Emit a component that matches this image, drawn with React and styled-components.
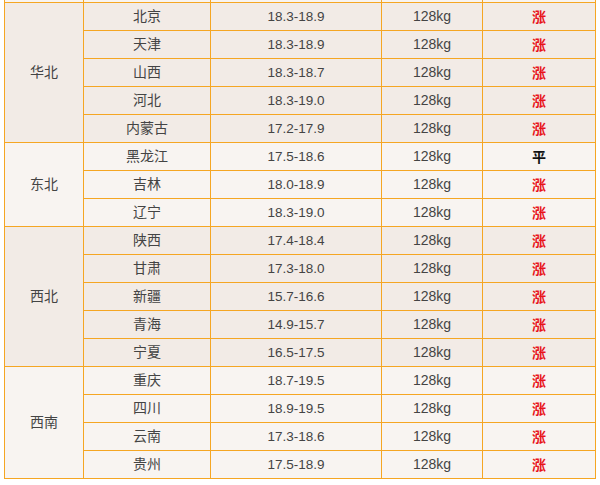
import React from "react";
import styled, { createGlobalStyle } from "styled-components";

const Global = createGlobalStyle`
  html, body { margin: 0; padding: 0; background: #fff; }
  body { font-family: "Liberation Sans", "Noto Sans CJK SC", sans-serif; overflow: hidden; }
`;

const Page = styled.div`
  width: 600px;
  height: 485px;
  overflow: hidden;
  padding-left: 4px;
  box-sizing: border-box;
`;

const Table = styled.table`
  border-collapse: collapse;
  table-layout: fixed;
  width: 591px;
  margin-top: -26px;
  color: #444;
  font-size: 14px;
`;

const Col = styled.col`
  width: ${(p) => p.$w}px;
`;

const Row = styled.tr`
  height: 28px;
  background: ${(p) => (p.$alt ? "#f8f4f1" : "#f2ebe6")};
`;

const Cell = styled.td`
  border: 1px solid #f5a623;
  text-align: center;
  vertical-align: middle;
  padding: 0;
  height: 27px;
  line-height: 27px;
  font-family: "Liberation Sans", "Noto Sans CJK SC", sans-serif;
  font-size: 14px;
`;

const PriceCell = styled(Cell)`
  font-size: 13.5px;
`;

const TrendCell = styled(Cell)`
  color: ${(p) => (p.$up ? "#e8141a" : "#111")};
  font-weight: bold;
  font-family: "Noto Sans CJK SC", sans-serif;
`;

const columns = [79, 127, 171, 101, 113];

const groups = [
  { region: "", alt: true, rows: [["", "", "", ""]] },
  {
    region: "华北",
    alt: false,
    rows: [
      ["北京", "18.3-18.9", "128kg", "涨"],
      ["天津", "18.3-18.9", "128kg", "涨"],
      ["山西", "18.3-18.7", "128kg", "涨"],
      ["河北", "18.3-19.0", "128kg", "涨"],
      ["内蒙古", "17.2-17.9", "128kg", "涨"],
    ],
  },
  {
    region: "东北",
    alt: true,
    rows: [
      ["黑龙江", "17.5-18.6", "128kg", "平"],
      ["吉林", "18.0-18.9", "128kg", "涨"],
      ["辽宁", "18.3-19.0", "128kg", "涨"],
    ],
  },
  {
    region: "西北",
    alt: false,
    rows: [
      ["陕西", "17.4-18.4", "128kg", "涨"],
      ["甘肃", "17.3-18.0", "128kg", "涨"],
      ["新疆", "15.7-16.6", "128kg", "涨"],
      ["青海", "14.9-15.7", "128kg", "涨"],
      ["宁夏", "16.5-17.5", "128kg", "涨"],
    ],
  },
  {
    region: "西南",
    alt: true,
    rows: [
      ["重庆", "18.7-19.5", "128kg", "涨"],
      ["四川", "18.9-19.5", "128kg", "涨"],
      ["云南", "17.3-18.6", "128kg", "涨"],
      ["贵州", "17.5-18.9", "128kg", "涨"],
    ],
  },
];

export default function App() {
  return (
    <>
      <Global />
      <Page>
        <Table>
          <colgroup>
            {columns.map((w, i) => (
              <Col key={i} $w={w} />
            ))}
          </colgroup>
          <tbody>
            {groups.map((g, gi) =>
              g.rows.map((r, i) => (
                <Row key={`${gi}-${i}`} $alt={g.alt}>
                  {i === 0 && <Cell rowSpan={g.rows.length}>{g.region}</Cell>}
                  <Cell>{r[0]}</Cell>
                  <PriceCell>{r[1]}</PriceCell>
                  <Cell>{r[2]}</Cell>
                  <TrendCell $up={r[3] === "涨"}>{r[3]}</TrendCell>
                </Row>
              ))
            )}
          </tbody>
        </Table>
      </Page>
    </>
  );
}
